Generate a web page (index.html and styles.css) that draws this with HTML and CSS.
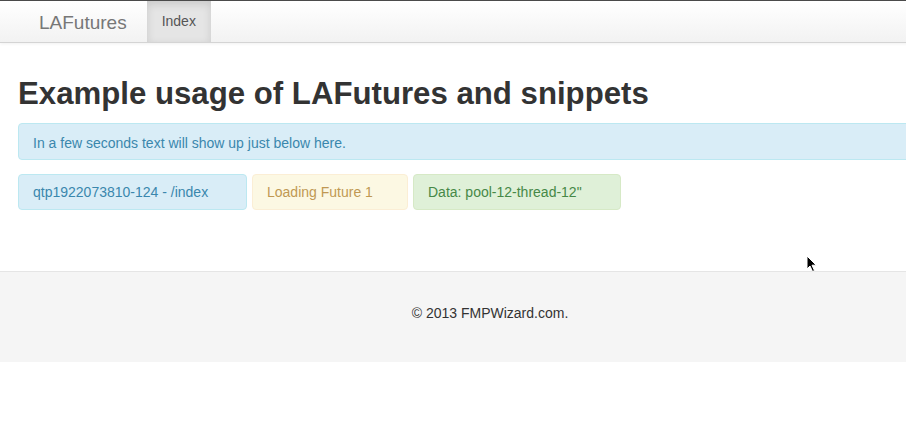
FILE: index.html
```html
<!DOCTYPE html>
<html>
<head>
<meta charset="utf-8">
<link rel="stylesheet" href="styles.css">
</head>
<body>
<div class="page">
  <div class="navbar">
    <a class="brand">LAFutures</a>
    <ul class="nav">
      <li class="active"><a>Index</a></li>
    </ul>
  </div>
  <div class="container">
    <h1>Example usage of LAFutures and snippets</h1>
    <div class="alert alert-info">In a few seconds text will show up just below here.</div>
    <div class="boxes">
      <div class="alert alert-info box b1">qtp1922073810-124 - /index</div>
      <div class="alert alert-warning box b2">Loading Future 1</div>
      <div class="alert alert-success box b3">Data: pool-12-thread-12"</div>
    </div>
  </div>
  <div class="footer">
    <p>© 2013 FMPWizard.com.</p>
  </div>
</div>
<svg class="cursor" width="12" height="18" viewBox="0 0 12 18"><path d="M1 1 L1 14 L4 11 L6.5 16.5 L8.5 15.6 L6 10.2 L10.2 10.2 Z" fill="#000" stroke="#fff" stroke-width="1"/></svg>
</body>
</html>
```

FILE: styles.css
```css
html { overflow: hidden; }
body {
  margin: 0;
  font-family: "Liberation Sans", Arial, sans-serif;
  font-size: 14px;
  color: #333;
  background: #fff;
  width: 906px;
  height: 442px;
  position: relative;
}
.page { width: 980px; }
.navbar {
  height: 41px;
  border-top: 1px solid #4a4a4a;
  border-bottom: 1px solid #d4d4d4;
  background: linear-gradient(#ffffff, #f2f2f2);
  display: flex;
  align-items: stretch;
  box-shadow: 0 1px 3px rgba(0,0,0,0.06);
}
.brand {
  font-size: 19px;
  font-weight: 300;
  color: #777;
  padding: 10px 20px 0 39px;
  line-height: 24px;
}
.nav { list-style: none; margin: 0; padding: 0; display: flex; }
.nav li a {
  display: block;
  padding: 0 15px;
  line-height: 41px;
  color: #555;
  font-size: 14px;
}
.nav li.active a {
  background: #e5e5e5;
  box-shadow: inset 0 3px 8px rgba(0,0,0,0.125);
}
.container { padding: 0 0 0 18px; }
h1 {
  margin: 31px 0 9px 0;
  font-size: 31.2px;
  line-height: 40px;
  font-weight: bold;
  color: #333;
}
.alert {
  border: 1px solid;
  border-radius: 4px;
  line-height: 17px;
  font-size: 14px;
}
.container > .alert-info { padding: 11px 35px 7px 14px; height: 37px; box-sizing: border-box; }
.alert-info { background: #d9edf7; border-color: #bce8f1; color: #3a87ad; }
.alert-warning { background: #fcf8e3; border-color: #fbeed5; color: #c09853; }
.alert-success { background: #dff0d8; border-color: #d6e9c6; color: #468847; }
.boxes { display: flex; gap: 5px; margin-top: 14px; }
.box { padding: 9px 0 8px 14px; box-sizing: border-box; height: 36px; }
.b1 { width: 229px; }
.b2 { width: 156px; }
.b3 { width: 208px; }
.footer {
  margin-top: 61px;
  border-top: 1px solid #e5e5e5;
  background: #f5f5f5;
  height: 91px;
  box-sizing: border-box;
  padding-top: 33px;
  text-align: center;
}
.footer p { margin: 0; font-size: 14px; line-height: 17px; color: #333; }
.cursor { position: absolute; left: 806px; top: 255px; }
```
